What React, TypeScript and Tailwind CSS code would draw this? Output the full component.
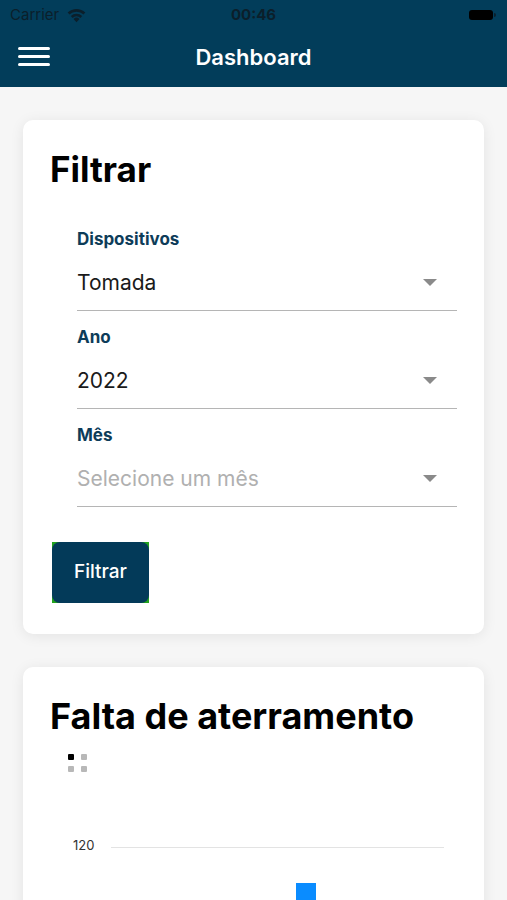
const font = { fontFamily: 'Inter, "Noto Sans", sans-serif' }

function SelectField({ label, value, placeholder }: { label: string; value?: string; placeholder?: string }) {
  return (
    <div className="flex flex-col">
      <span className="text-[17px] font-bold leading-[22px] text-[#0d3c59]">{label}</span>
      <div className="flex h-[61px] items-center justify-between border-b border-[#b5b5b5] pr-[20px] pt-[6px]">
        <span className={`text-[21px] ${value ? 'text-[#1a1a1a]' : 'text-[#b0b0b0]'}`}>{value ?? placeholder}</span>
        <svg width="14" height="8" viewBox="0 0 14 8"><path d="M0 0h14L7 7z" fill="#8a8a8a" /></svg>
      </div>
    </div>
  )
}

export default function App() {
  return (
    <div className="min-h-screen bg-[#f6f6f6]" style={font}>
      <div className="bg-[#023d5a]">
        <div className="relative flex h-[30px] items-center px-[10px]">
          <span className="text-[15px] text-[#0b1f2b]">Carrier</span>
          <svg className="ml-[7px]" width="21" height="16" viewBox="0 0 20 15">
            <path d="M10 14.5 7.2 11.3a4 4 0 0 1 5.6 0z" fill="#0b1f2b" />
            <path d="M4.6 8.4a7.8 7.8 0 0 1 10.8 0l-1.7 1.9a5.3 5.3 0 0 0-7.4 0z" fill="#0b1f2b" />
            <path d="M1.6 5.2a12 12 0 0 1 16.8 0l-1.7 1.9a9.5 9.5 0 0 0-13.4 0z" fill="#0b1f2b" />
          </svg>
          <span className="absolute left-1/2 -translate-x-1/2 text-[15px] font-bold text-[#0b1f2b]">00:46</span>
          <div className="ml-auto mr-[1px] flex items-center">
            <div className="h-[10px] w-[24px] rounded-[3px] bg-black" />
            <div className="ml-[1px] h-[4px] w-[2px] rounded-r-sm bg-[#0b1f2b]" />
          </div>
        </div>
        <div className="relative flex h-[57px] items-center px-[18px]">
          <div className="-mt-[4px] flex w-[32px] flex-col gap-[5px]">
            <div className="h-[3px] rounded bg-white" />
            <div className="h-[3px] rounded bg-white" />
            <div className="h-[3px] rounded bg-white" />
          </div>
          <span className="absolute left-1/2 -mt-[3px] -translate-x-1/2 text-[22px] font-semibold text-white">Dashboard</span>
        </div>
      </div>

      <div className="flex flex-col gap-[33px] px-[23px] pt-[33px]">
        <div className="rounded-[10px] bg-white pb-[31px] pl-[27px] pr-[27px] pt-[26px] shadow-[0_2px_14px_rgba(0,0,0,0.08)]">
          <h2 className="text-[35px] font-bold leading-[46px] text-black">Filtrar</h2>
          <div className="mt-[36px] flex flex-col gap-[15px] pl-[27px]">
            <SelectField label="Dispositivos" value="Tomada" />
            <SelectField label="Ano" value="2022" />
            <SelectField label="Mês" placeholder="Selecione um mês" />
          </div>
          <div className="ml-[2px] mt-[35px] inline-block bg-[#22a21e]">
            <button className="h-[61px] w-[97px] rounded-[8px] bg-[#033a59] text-[19px] font-medium text-white">Filtrar</button>
          </div>
        </div>

        <div className="h-[300px] rounded-[10px] bg-white pl-[27px] pr-[27px] pt-[26px] shadow-[0_2px_14px_rgba(0,0,0,0.08)]">
          <h2 className="text-[36px] font-bold leading-[46px] text-black">Falta de aterramento</h2>
          <div className="ml-[18px] mt-[15px] grid w-[19px] grid-cols-2 gap-[6px]">
            <div className="h-[6px] w-[6px] rounded-[1px] bg-black" />
            <div className="h-[6px] w-[6px] rounded-[1px] bg-[#b8b8b8]" />
            <div className="h-[6px] w-[6px] rounded-[1px] bg-[#b8b8b8]" />
            <div className="h-[6px] w-[6px] rounded-[1px] bg-[#b8b8b8]" />
          </div>
          <div className="mt-[64px] flex items-center pl-[23px]">
            <span className="w-[38px] text-[13px] text-[#333]">120</span>
            <div className="mt-[4px] h-px w-[333px] bg-[#e3e3e3]" />
          </div>
          <div className="ml-[246px] mt-[27px] h-[40px] w-[20px] bg-[#0a8cff]" />
        </div>
      </div>
    </div>
  )
}
